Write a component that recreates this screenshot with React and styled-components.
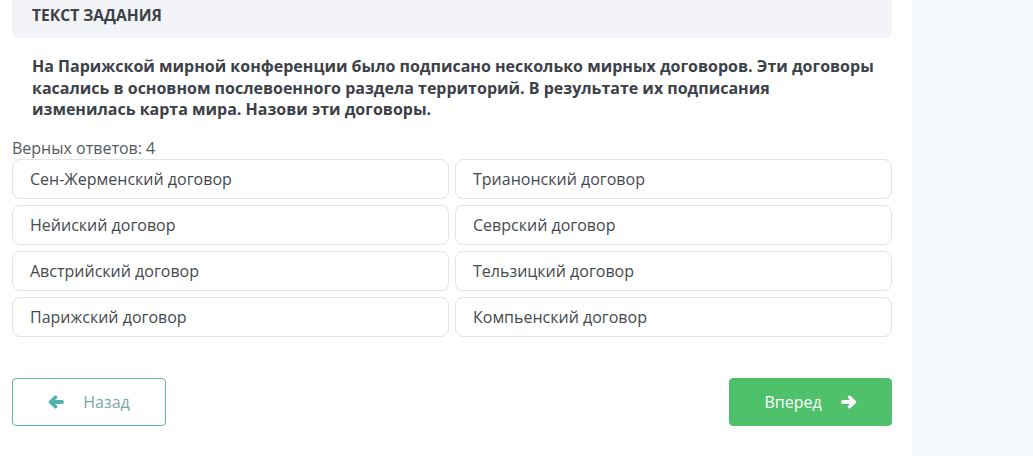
import { createGlobalStyle, styled } from "styled-components";

const GlobalStyle = createGlobalStyle`
  html, body {
    margin: 0;
    padding: 0;
    background: #f5f8fc;
    font-family: "Open Sans", "Liberation Sans", sans-serif;
  }
`;

const Pagina = styled.div`
  display: flex;
  min-height: 456px;
`;
const Contenido = styled.div`
  width: 912px;
  box-sizing: border-box;
  padding: 0 20px 30px 12px;
  background: #ffffff;
`;
const Encabezado = styled.div`
  height: 38px;
  box-sizing: border-box;
  padding: 5px 20px 0 20px;
  background: #f3f4f7;
  border-radius: 0 0 6px 6px;
  font-size: 15.6px;
  line-height: 20px;
  font-weight: 700;
  color: #3c4148;
  text-transform: uppercase;
`;
const Pregunta = styled.p`
  margin: 18px 0 0 0;
  padding: 0 0 0 20px;
  font-size: 16px;
  line-height: 21.5px;
  font-weight: 700;
  color: #3c4148;
`;
const Contador = styled.div`
  margin-top: 17px;
  font-size: 16px;
  line-height: 20px;
  color: #555a60;
`;
const Rejilla = styled.div`
  display: grid;
  grid-template-columns: 1fr 1fr;
  column-gap: 6px;
  row-gap: 6px;
  margin-top: 1px;
`;
const Opcion = styled.div`
  height: 40px;
  box-sizing: border-box;
  display: flex;
  align-items: center;
  padding-left: 17px;
  border: 1px solid #e3e4e6;
  border-radius: 8px;
  font-size: 16px;
  color: #45494f;
  background: #fff;
`;
const Navegacion = styled.div`
  display: flex;
  justify-content: space-between;
  margin-top: 41px;
`;
const Boton = styled.button`
  height: 48px;
  box-sizing: border-box;
  display: flex;
  align-items: center;
  justify-content: center;
  gap: 19px;
  border-radius: 4px;
  font-family: inherit;
  font-size: 16px;
  cursor: pointer;
  width: ${(p) => (p.$primario ? "163px" : "154px")};
  border: 1px solid ${(p) => (p.$primario ? "#4fc16a" : "#5fb3ab")};
  background: ${(p) => (p.$primario ? "#4fc16a" : "#ffffff")};
  color: ${(p) => (p.$primario ? "#ffffff" : "#79a8ac")};
  svg {
    width: 16px;
    height: 14px;
    color: ${(p) => (p.$primario ? "#ffffff" : "#4fb3a8")};
  }
`;

const Flecha = ({ derecha }) => (
  <svg viewBox="0 0 16 14" style={derecha ? { transform: "scaleX(-1)" } : undefined}>
    <g fill="none" stroke="currentColor" strokeLinecap="round" strokeLinejoin="round">
      <path d="M14 7H4" strokeWidth="4" />
      <path d="M7.5 2.2L2.5 7l5 4.8" strokeWidth="3.4" />
    </g>
  </svg>
);

const opciones = [
  "Сен-Жерменский договор",
  "Трианонский договор",
  "Нейиский договор",
  "Севрский договор",
  "Австрийский договор",
  "Тельзицкий договор",
  "Парижский договор",
  "Компьенский договор",
];

const App = () => {
  return (
    <>
      <GlobalStyle />
      <Pagina>
        <Contenido>
          <Encabezado>Текст задания</Encabezado>
          <Pregunta>
            На Парижской мирной конференции было подписано несколько мирных
            договоров. Эти договоры касались в основном послевоенного раздела
            территорий. В результате их подписания
            <br />
            изменилась карта мира. Назови эти договоры.
          </Pregunta>
          <Contador>Верных ответов: 4</Contador>
          <Rejilla>
            {opciones.map((o) => (
              <Opcion key={o}>{o}</Opcion>
            ))}
          </Rejilla>
          <Navegacion>
            <Boton>
              <Flecha />
              Назад
            </Boton>
            <Boton $primario>
              Вперед
              <Flecha derecha />
            </Boton>
          </Navegacion>
        </Contenido>
      </Pagina>
    </>
  );
};
export default App;
